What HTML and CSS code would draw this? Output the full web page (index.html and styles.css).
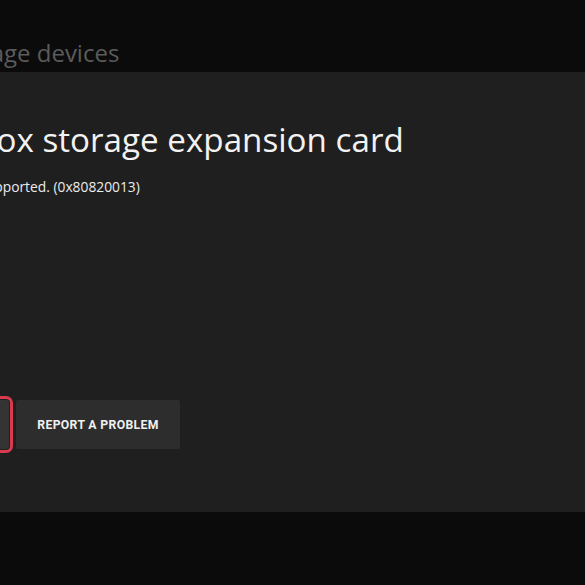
FILE: index.html
```html
<!DOCTYPE html>
<html lang="en">
<head>
<meta charset="utf-8">
<title>Manage devices</title>
<link rel="stylesheet" href="styles.css">
</head>
<body>
  <header class="topbar">
    <h1 class="page-title">Manage devices</h1>
  </header>
  <main class="panel">
    <h2 class="card-title">Xbox storage expansion card</h2>
    <p class="card-message">This device isn't supported. (0x80820013)</p>
    <div class="actions">
      <button class="btn btn-focused" type="button">OK</button>
      <button class="btn" type="button">REPORT A PROBLEM</button>
    </div>
  </main>
</body>
</html>
```

FILE: styles.css
```css
html, body {
  margin: 0;
  padding: 0;
}

body {
  width: 585px;
  height: 585px;
  overflow: hidden;
  background: #0b0b0b;
  font-family: "Open Sans", "Noto Sans", sans-serif;
}

.topbar {
  height: 72px;
  display: flex;
  align-items: flex-start;
}

.page-title {
  margin: 37px 0 0 -59px;
  font-size: 24px;
  font-weight: 400;
  line-height: 32px;
  color: #5b5b5b;
  white-space: nowrap;
}

.panel {
  height: 440px;
  background: #1f1f1f;
  display: flex;
  flex-direction: column;
  align-items: flex-start;
}

.card-title {
  margin: 46px 0 0 -43px;
  font-size: 33.2px;
  font-weight: 400;
  line-height: 44px;
  color: #f2f2f2;
  white-space: nowrap;
}

.card-message {
  margin: 15px 0 0 -125px;
  font-size: 13.8px;
  line-height: 20px;
  color: #ececec;
  white-space: nowrap;
}

.actions {
  margin: 203px 0 0 -155px;
  display: flex;
  gap: 7px;
}

.btn {
  width: 164px;
  height: 49px;
  border: 0;
  border-radius: 2px;
  background: #2d2d2d;
  color: #f0f0f0;
  font-family: Roboto, "Open Sans", sans-serif;
  font-weight: 700;
  font-size: 12.2px;
  letter-spacing: 0.35px;
  padding: 0;
}

.btn-focused {
  background: #343434;
  outline: 3px solid #d93a4e;
  outline-offset: 1px;
  border-radius: 3px;
}
```
